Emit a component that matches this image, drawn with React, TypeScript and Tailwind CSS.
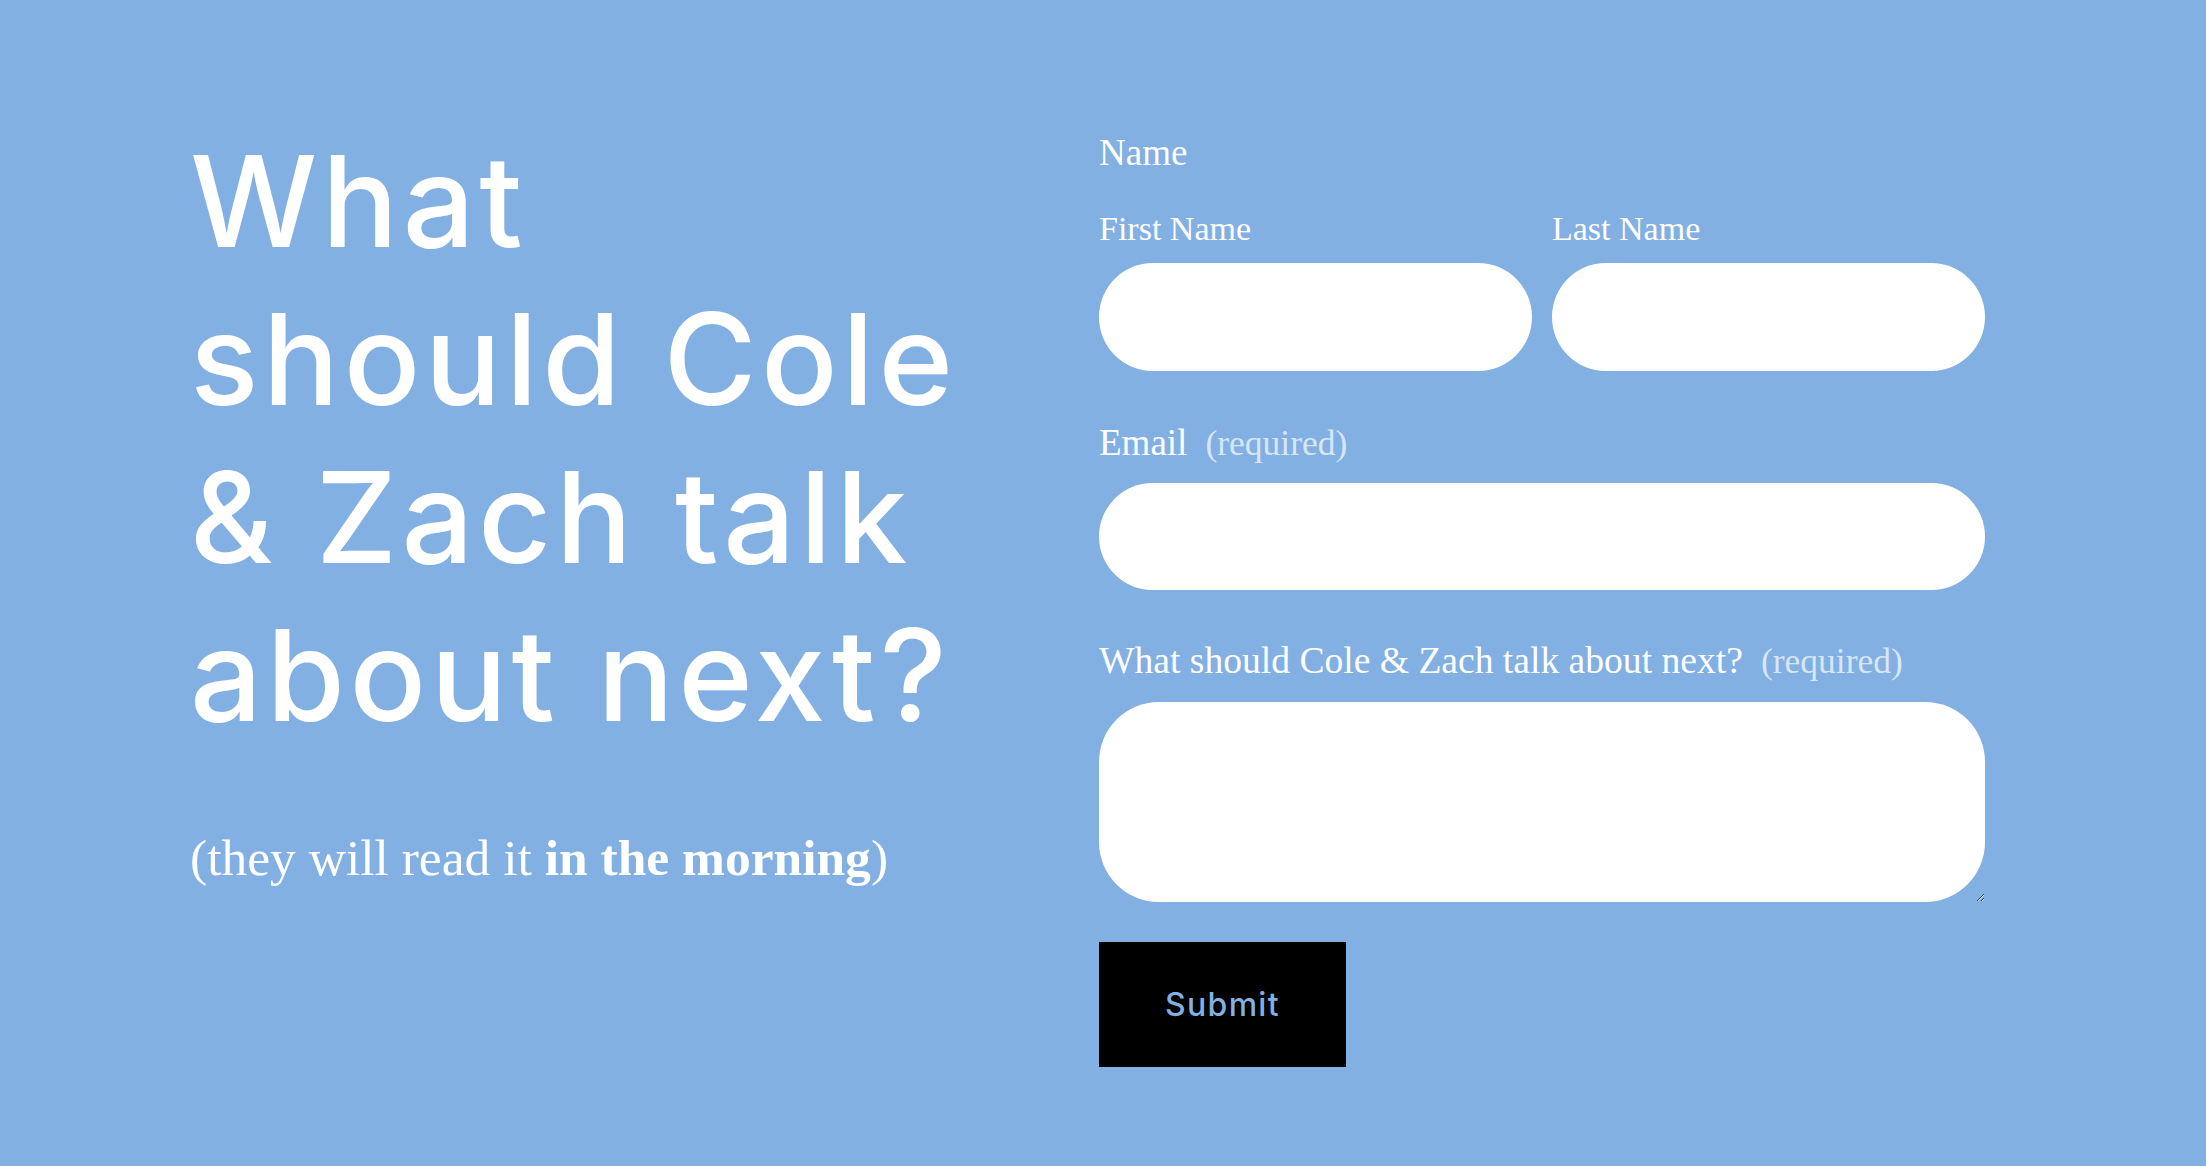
import React from "react";

export default function App() {
  return (
    <div className="w-full h-[1166px] bg-[#82b0e2] overflow-hidden flex pl-[190px]">
      <div className="w-[909px] shrink-0 pt-[122px]">
        <h1 className="font-['Inter',sans-serif] text-white text-[127px] leading-[158px] font-medium tracking-[0.035em]">
          What
          <br />
          should Cole
          <br />
          &amp; Zach talk
          <br />
          about next?
        </h1>
        <p className="mt-[74px] text-white text-[51.5px] leading-[60px] font-['Liberation_Serif',serif]">
          (they will read it <span className="font-bold">in the morning</span>)
        </p>
      </div>
      <form
        className="w-[886px] shrink-0 flex flex-col pt-[131px] font-['Liberation_Serif',serif] text-white"
        onSubmit={(e) => e.preventDefault()}
      >
        <div className="text-[37px] leading-[44px]">Name</div>
        <div className="mt-[34px] flex gap-[20px]">
          <div className="flex-1 flex flex-col">
            <label className="text-[34px] leading-[40px]">First Name</label>
            <input className="mt-[14px] h-[108px] w-full rounded-full bg-white outline-none px-8 text-black" />
          </div>
          <div className="flex-1 flex flex-col">
            <label className="text-[34px] leading-[40px]">Last Name</label>
            <input className="mt-[14px] h-[108px] w-full rounded-full bg-white outline-none px-8 text-black" />
          </div>
        </div>
        <label className="mt-[50px] text-[37px] leading-[44px]">
          Email
          <span className="ml-[18px] text-[35.5px] text-white/70">(required)</span>
        </label>
        <input className="mt-[18px] h-[107px] w-full rounded-full bg-white outline-none px-8 text-black" />
        <label className="mt-[49px] text-[37.6px] leading-[44px]">
          What should Cole &amp; Zach talk about next?
          <span className="ml-[18px] text-[35.5px] text-white/70">(required)</span>
        </label>
        <textarea className="mt-[19px] h-[200px] w-full rounded-[60px] bg-white outline-none p-8 text-black" />
        <div className="mt-[40px]">
          <button
            type="submit"
            className="w-[247px] h-[125px] bg-black text-[#82b0e2] font-['Inter',sans-serif] font-medium text-[32px] tracking-[0.04em]"
          >
            Submit
          </button>
        </div>
      </form>
    </div>
  );
}
